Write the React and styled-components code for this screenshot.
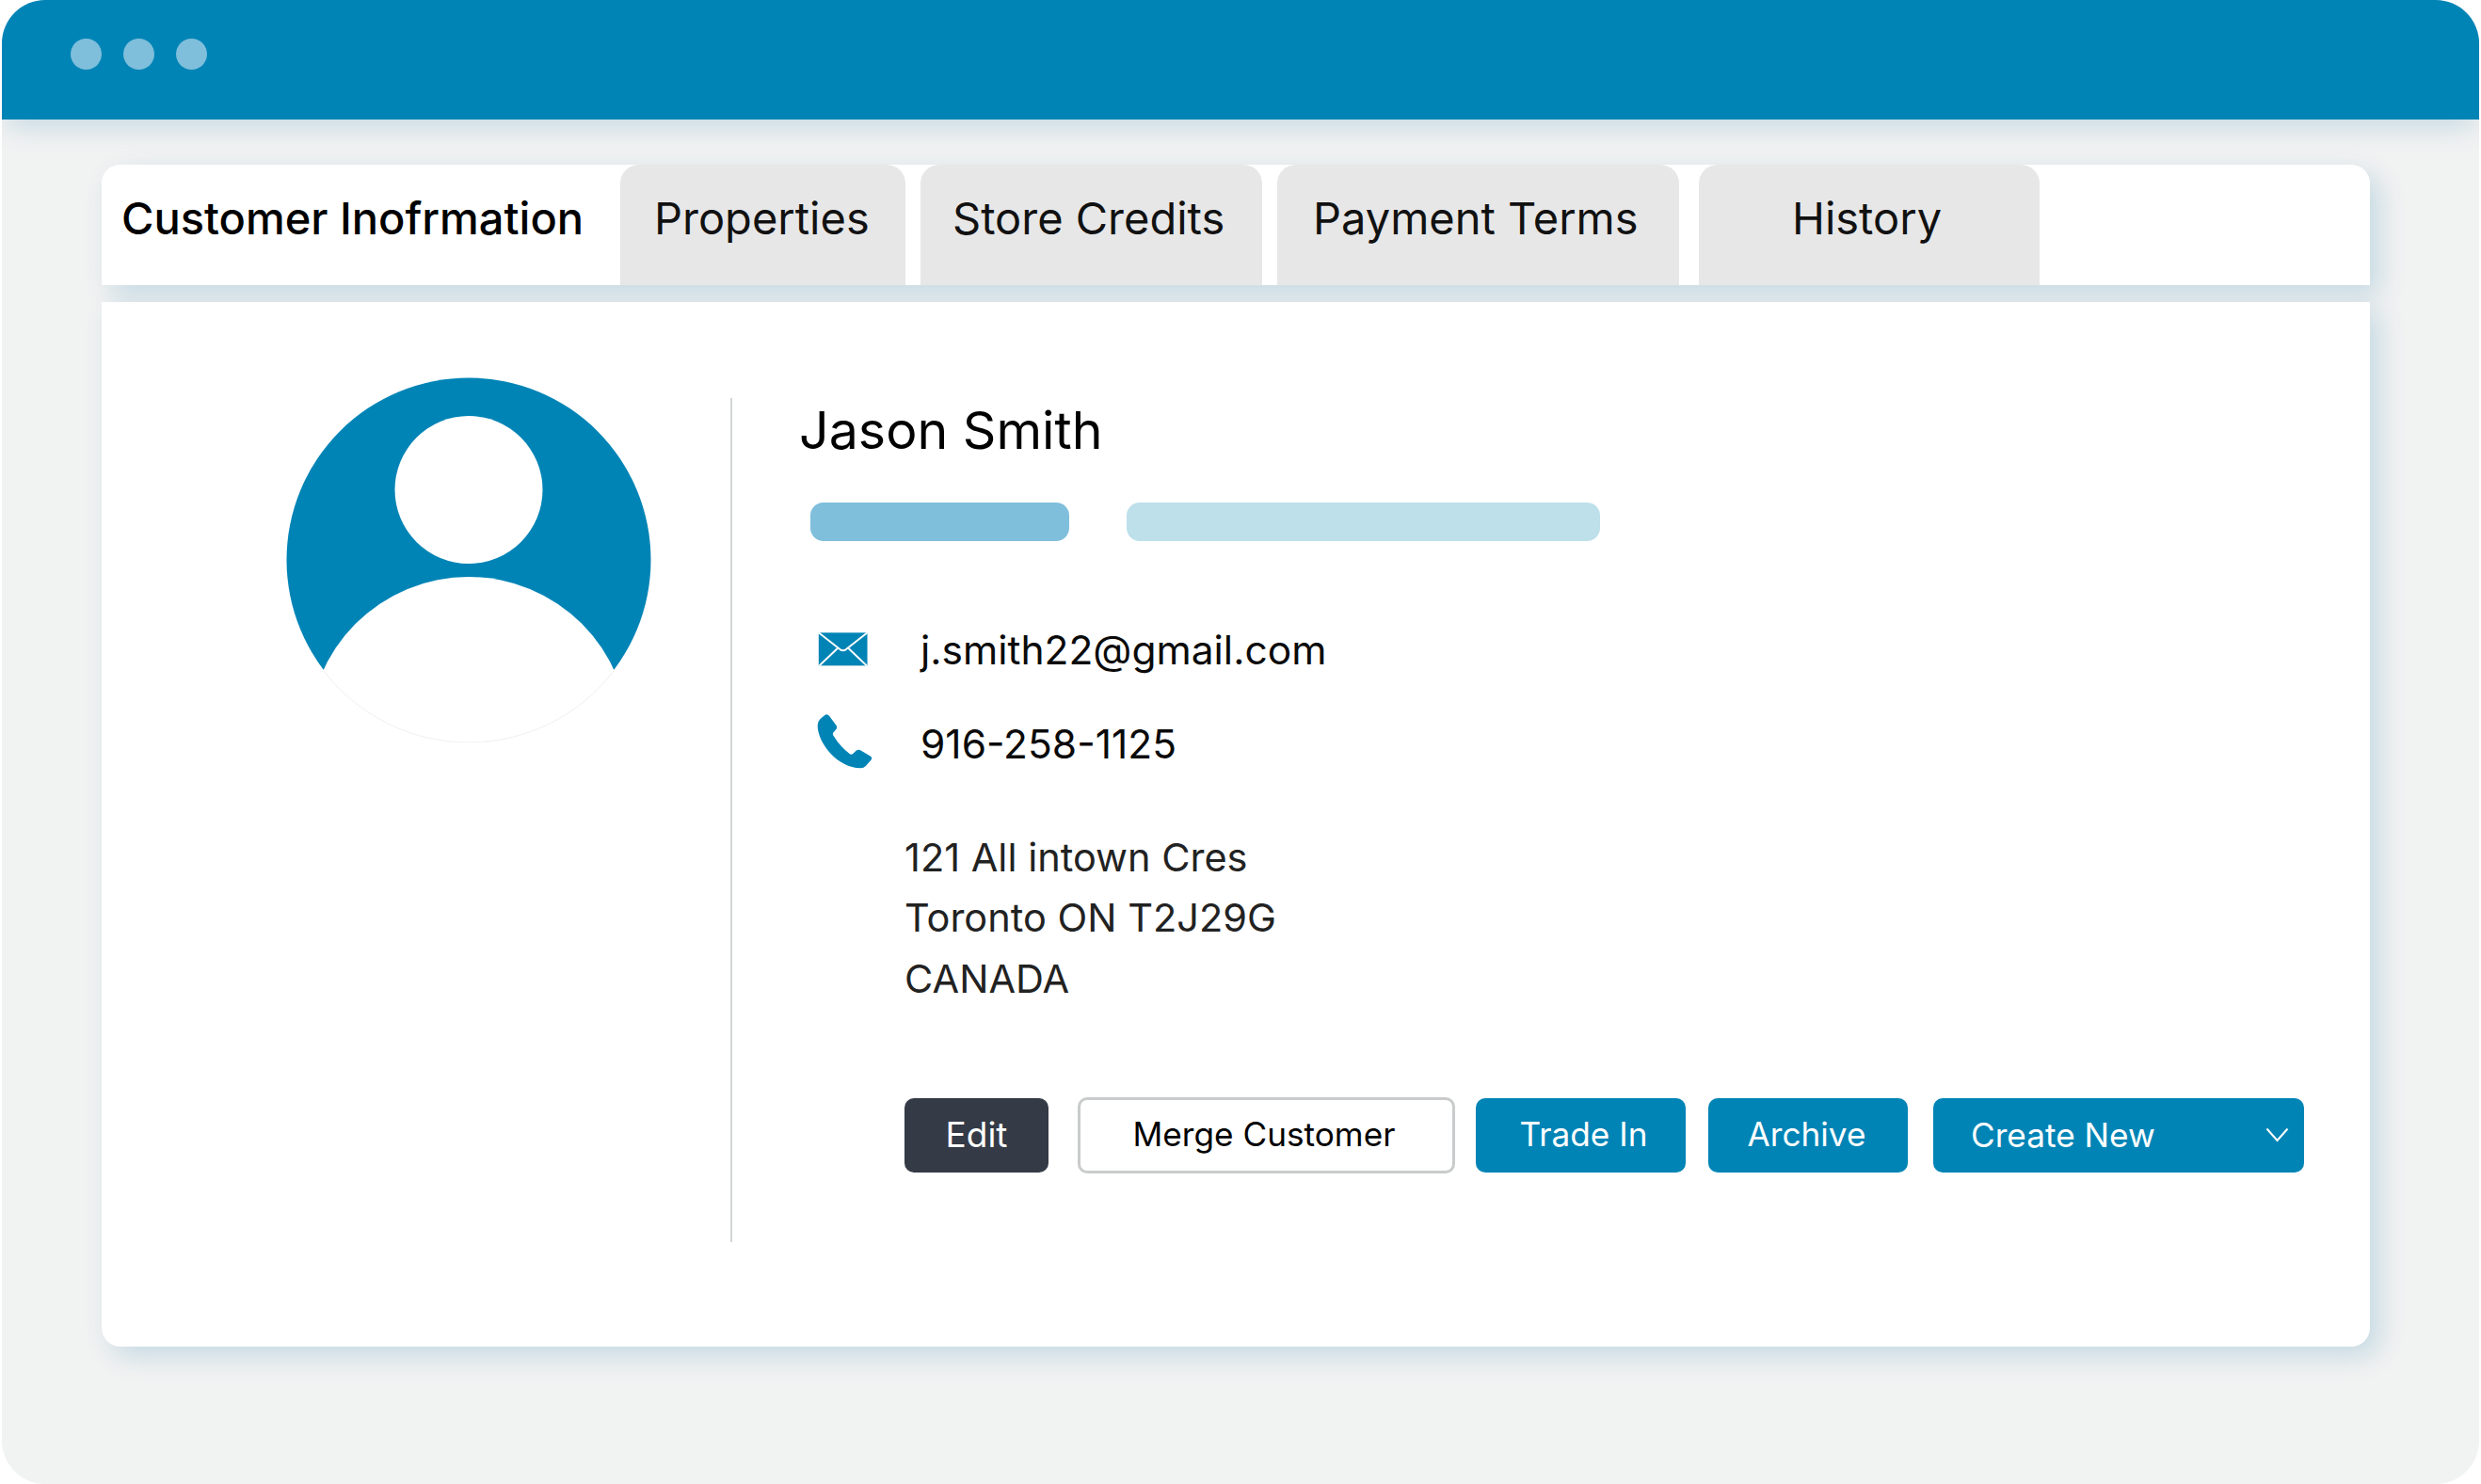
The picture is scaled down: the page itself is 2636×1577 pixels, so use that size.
import React from "react";
import styled, { createGlobalStyle } from "styled-components";

const BLUE = "#0084b6";

const Global = createGlobalStyle`
  html, body { margin: 0; padding: 0; background: #ffffff; }
  body { font-family: Inter, "Noto Sans", "Liberation Sans", sans-serif; color: #111; }
  * { box-sizing: border-box; }
`;

const Page = styled.div`
  width: 2636px;
  height: 1577px;
  padding: 0 2px;
  overflow: hidden;
`;

const Window = styled.div`
  height: 1577px;
  background: #f1f2f2;
  border-radius: 46px;
  overflow: hidden;
  display: flex;
  flex-direction: column;
`;

const TitleBar = styled.header`
  flex: none;
  height: 127px;
  background: ${BLUE};
  padding: 41px 0 0 73px;
  display: flex;
  gap: 23px;
  box-shadow: 0 12px 28px -6px rgba(0, 110, 160, 0.2);
  position: relative;
  z-index: 2;
`;

const Dot = styled.span`
  width: 33px;
  height: 33px;
  border-radius: 50%;
  background: #7fbfdb;
`;

const Card = styled.main`
  margin: 48px 0 0 106px;
  width: 2410px;
  display: flex;
  flex-direction: column;
`;

const TabStrip = styled.nav`
  height: 128px;
  background: #fff;
  border-radius: 20px 20px 0 0;
  display: flex;
  box-shadow: 10px 10px 28px rgba(0, 110, 160, 0.18);
`;

const Tab = styled.div`
  flex: none;
  width: ${(p) => p.$w}px;
  margin-right: ${(p) => p.$gap || 0}px;
  padding: 27px 0 0 ${(p) => p.$pad}px;
  font-size: 47px;
  line-height: 60px;
  font-weight: ${(p) => (p.$active ? 500 : 400)};
  color: ${(p) => (p.$active ? "#000" : "#111")};
  background: ${(p) => (p.$active ? "#fff" : "#e7e7e8")};
  border-radius: 20px 20px 0 0;
  white-space: nowrap;
`;

const Panel = styled.section`
  margin-top: 18px;
  height: 1110px;
  background: #fff;
  border-radius: 0 0 20px 20px;
  display: flex;
  box-shadow: 10px 10px 28px rgba(0, 110, 160, 0.18);
  position: relative;
`;

const AvatarCol = styled.div`
  flex: none;
  width: 668px;
  padding: 80px 0 0 196px;
`;

const Avatar = styled.svg`
  display: block;
  width: 388px;
  height: 388px;
`;

const Info = styled.div`
  flex: 1;
  margin-top: 102px;
  height: 897px;
  border-left: 2px solid #d3d5d6;
  padding-left: 71px;
`;

const Name = styled.h1`
  margin: 0;
  font-size: 55.5px;
  line-height: 68px;
  font-weight: 400;
  color: #000;
  white-space: nowrap;
`;

const Pills = styled.div`
  margin: 43px 0 0 12px;
  display: flex;
  gap: 61px;
`;

const Pill = styled.span`
  width: ${(p) => p.$w}px;
  height: 41px;
  border-radius: 14px;
  background: ${(p) => p.$color};
`;

const ContactRow = styled.div`
  display: flex;
  align-items: center;
  height: 64px;
  margin-top: ${(p) => p.$top}px;
  padding-left: 20px;
  font-size: 42.5px;
  color: #0a0a0a;
  white-space: nowrap;
`;

const IconSlot = styled.span`
  flex: none;
  width: 109px;
  display: flex;
  align-items: center;
`;

const PhoneIcon = styled.svg`
  margin: -5px 0 0 -1px;
`;

const Address = styled.address`
  margin: 57px 0 0 112px;
  font-style: normal;
  font-size: 41.5px;
  line-height: 64.4px;
  color: #222;
`;

const AddressLine = styled.div`
  white-space: nowrap;
`;

const Actions = styled.div`
  margin: 94px 0 0 112px;
  display: flex;
  align-items: center;
`;

const Button = styled.div`
  flex: none;
  width: ${(p) => p.$w}px;
  height: ${(p) => (p.$outline ? 81 : 79)}px;
  margin-right: ${(p) => p.$gap || 0}px;
  border-radius: 10px;
  display: flex;
  align-items: center;
  justify-content: ${(p) => (p.$between ? "space-between" : "center")};
  padding: ${(p) =>
    p.$between
      ? "0 16px 2px 40px"
      : `0 ${p.$padR || 0}px 3px ${p.$padL || 0}px`};
  font-size: ${(p) => (p.$dark ? 37 : 35.2)}px;
  white-space: nowrap;
  color: ${(p) => (p.$outline ? "#000" : "#fff")};
  background: ${(p) => (p.$outline ? "#fff" : p.$dark ? "#343a46" : BLUE)};
  border: ${(p) => (p.$outline ? "3px solid #c9cbcc" : "0")};
`;

const tabs = [
  { t: "Customer Inofrmation", w: 551, pad: 21, active: true },
  { t: "Properties", w: 303, pad: 36, gap: 16 },
  { t: "Store Credits", w: 363, pad: 34, gap: 16 },
  { t: "Payment Terms", w: 427, pad: 38, gap: 21 },
  { t: "History", w: 362, pad: 99 },
];

export default function App() {
  return (
    <Page>
      <Global />
      <Window>
        <TitleBar>
          <Dot />
          <Dot />
          <Dot />
        </TitleBar>
        <Card>
          <TabStrip>
            {tabs.map((x) => (
              <Tab key={x.t} $w={x.w} $pad={x.pad} $gap={x.gap} $active={x.active}>
                {x.t}
              </Tab>
            ))}
          </TabStrip>
          <Panel>
            <AvatarCol>
              <Avatar viewBox="0 0 388 388">
                <defs>
                  <clipPath id="avatarClip">
                    <circle cx="194" cy="194" r="194" />
                  </clipPath>
                </defs>
                <circle cx="194" cy="194" r="193.5" fill={BLUE} />
                <circle cx="194" cy="119.5" r="78.5" fill="#fff" />
                <g clipPath="url(#avatarClip)">
                  <circle cx="194" cy="382" r="170" fill="#fff" />
                </g>
                <path d="M40 312 A194 194 0 0 0 348 312" fill="none" stroke="#f0f1f1" strokeWidth="1" />
              </Avatar>
            </AvatarCol>
            <Info>
              <Name>Jason Smith</Name>
              <Pills>
                <Pill $w={275} $color="#7fbfdb" />
                <Pill $w={503} $color="#bde0eb" />
              </Pills>
              <ContactRow $top={83}>
                <IconSlot>
                  <svg width="54" height="36" viewBox="88 88 160 110">
                    <rect x="88" y="89" width="158" height="107" fill={BLUE} />
                    <path
                      d="M88 89 L158 144 Q167 150 176 144 L246 89 M90 196 L150 139 M244 196 L184 139"
                      fill="none"
                      stroke="#fff"
                      strokeWidth="6"
                    />
                  </svg>
                </IconSlot>
                j.smith22@gmail.com
              </ContactRow>
              <ContactRow $top={36}>
                <IconSlot>
                  <PhoneIcon width="60" height="60" viewBox="82 354 182 180">
                    <path
                      d="M92 372 L108 358 Q116 354 122 362 L144 392 Q149 399 143 405 L134 416 Q132 420 135 425 Q158 462 188 484 Q192 487 197 484 L209 473 Q215 468 222 472 L254 491 Q262 496 256 504 L240 522 Q233 530 222 530 C150 530 84 450 84 392 Q84 380 92 372 Z"
                      fill={BLUE}
                    />
                  </PhoneIcon>
                </IconSlot>
                916-258-1125
              </ContactRow>
              <Address>
                <AddressLine>121 All intown Cres</AddressLine>
                <AddressLine>Toronto ON T2J29G</AddressLine>
                <AddressLine>CANADA</AddressLine>
              </Address>
              <Actions>
                <Button $w={153} $gap={31} $dark>Edit</Button>
                <Button $w={401} $gap={22} $outline $padR={5}>Merge Customer</Button>
                <Button $w={223} $gap={24} $padL={6}>Trade In</Button>
                <Button $w={212} $gap={27} $padR={3}>Archive</Button>
                <Button $w={394} $between>
                  Create New
                  <svg width="25" height="16" viewBox="0 0 25 16">
                    <path d="M1.5 1.5 L12.5 14 L23.5 1.5" fill="none" stroke="#fff" strokeWidth="2" />
                  </svg>
                </Button>
              </Actions>
            </Info>
          </Panel>
        </Card>
      </Window>
    </Page>
  );
}
